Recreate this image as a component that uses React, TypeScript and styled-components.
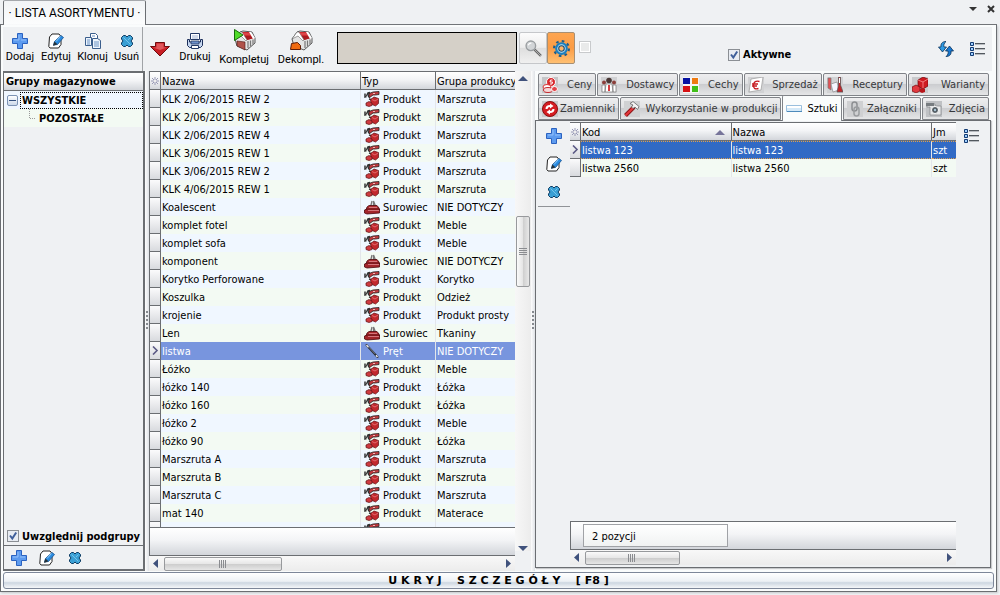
import React from "react";
import styled, { createGlobalStyle, css } from "styled-components";

const line = "#6b6e72";
const panel = "#eff1f3";
const steel = "linear-gradient(#ffffff, #f3f4f6 45%, #d3d6db)";

const Global = createGlobalStyle`
  * { box-sizing: border-box; }
  html, body { margin: 0; background: ${panel}; }
  body, button, input, table {
    font-family: "DejaVu Sans Condensed", "DejaVu Sans", sans-serif;
    font-size: 11px;
    color: #000;
  }
  button { border: 0; padding: 0; background: none; }
  svg { display: block; flex: none; }
`;

/* ---------- layout ---------- */

const Shell = styled.div`
  height: 100vh;
  display: flex;
  flex-direction: column;
  padding: 0 3px 3px 0;
  overflow: hidden;
`;
const TitleBar = styled.header`
  height: 25px;
  flex: none;
  display: flex;
  padding-left: 3px;
  background: linear-gradient(${line}, ${line}) bottom / 100% 1px no-repeat;
`;
const DocTab = styled.button`
  width: 143px;
  border: 1px solid ${line};
  border-top-color: #a5a8ac;
  border-bottom: 0;
  border-radius: 2px 2px 0 0;
  background: linear-gradient(#f2f4f6, #fcfdfd);
  font-family: Roboto, sans-serif;
  font-size: 12px;
  line-height: 24px;
`;
const WindowTools = styled.div`
  margin-left: auto;
  display: flex;
  gap: 10px;
  align-items: flex-start;
  padding: 4px 2px 0 0;
`;
const Frame = styled.main`
  flex: 1;
  min-height: 0;
  display: flex;
  flex-direction: column;
  border: 1px solid ${line};
  border-top: 0;
  padding: 2px;
  gap: 1px;
  background: #fafcfc;
  box-shadow: 1px 1px 2px #c5c8cb;
`;
const Work = styled.div`
  flex: 1;
  min-height: 0;
  display: flex;
`;
const Side = styled.aside`
  width: 142px;
  flex: none;
  display: flex;
  flex-direction: column;
  background: ${panel};
`;
const Content = styled.section`
  flex: 1;
  min-width: 0;
  display: flex;
  flex-direction: column;
`;
const Split = styled.div`
  flex: 1;
  min-height: 0;
  display: flex;
`;
const Toolbar = styled.div`
  height: 44px;
  flex: none;
  display: flex;
  background: ${panel};
`;
const SideTools = styled(Toolbar)`
  border-right: 1px solid #a0a3a6;
  margin-right: 2px;
  padding: 6px 3px 0;
  gap: 7px;
`;
const MainTools = styled(Toolbar)`
  padding-left: 5px;
  margin-right: 2px;
`;
const Tool = styled.button<{ $width: number; $low?: boolean }>`
  width: ${(p) => p.$width}px;
  flex: none;
  display: flex;
  flex-direction: column;
  align-items: center;
  gap: ${(p) => (p.$low ? 2 : 1)}px;
  align-self: flex-start;
  white-space: nowrap;
  font-family: Roboto, sans-serif;
  font-size: 11px;
  line-height: 14px;
`;
const ToolSet = styled.div`
  width: 182px;
  flex: none;
  display: flex;
  gap: 9px;
  padding-top: 2px;
`;
const Push = styled.div<{ $top: number }>`
  padding-top: ${(p) => p.$top}px;
`;
const SearchBox = styled.input`
  width: 180px;
  height: 32px;
  flex: none;
  margin: 5px 2px 0 5px;
  border: 1px solid #000;
  border-radius: 0;
  background: #d5d0c8;
`;
const SquareButton = styled.button<{ $on?: boolean }>`
  width: 28px;
  height: 32px;
  margin-top: 5px;
  display: flex;
  align-items: center;
  justify-content: center;
  border: 1px solid ${(p) => (p.$on ? "#a88f72" : "#c5c7ca")};
  border-radius: 2px;
  background: ${(p) =>
    p.$on
      ? "linear-gradient(#fda550, #fb9c45 50%, #ffc072)"
      : "linear-gradient(#fcfcfc, #ededed 48%, #dedede 50%, #f0f0f0)"};
`;
const Tick = styled.input`
  appearance: none;
  width: 12px;
  height: 12px;
  flex: none;
  margin: 0;
  border: 1px solid #8b8f94;
  background: #fff;
  box-shadow: inset 0 0 0 1px #fff, inset 0 0 0 9px #dfe4ec;
  &:checked {
    background: #e8ecf2
      url("data:image/svg+xml,%3Csvg xmlns='http://www.w3.org/2000/svg' viewBox='0 0 10 10'%3E%3Cpath d='M2 4.5l2.3 3L8.200 1.500' fill='none' stroke='%233f5f9a' stroke-width='2'/%3E%3C/svg%3E")
      center / 10px no-repeat;
    box-shadow: none;
  }
  &:disabled { border-color: #c8cacc; box-shadow: inset 0 0 0 1px #fff, inset 0 0 0 9px #e9eaea; }
`;
const TickLabel = styled.label`
  display: flex;
  align-items: center;
  gap: 3px;
  font-weight: bold;
  white-space: nowrap;
`;
const ActiveLabel = styled(TickLabel)`
  margin: 21px auto 0 137px;
  align-self: flex-start;
`;
const SpareTick = styled(Tick)`
  margin: 14px 0 0 4px;
`;
const RightTools = styled.div`
  display: flex;
  gap: 16px;
  padding: 14px 6px 0 0;
`;

/* ---------- group tree ---------- */

const TreeBox = styled.div`
  flex: 1;
  min-height: 0;
  border: 1px solid ${line};
  border-width: 2px 2px 0 1px;
`;
const TreeHead = styled.div`
  height: 18px;
  padding-left: 2px;
  border-bottom: 1px solid ${line};
  background: ${steel};
  font-weight: bold;
  line-height: 18px;
`;
const TreeItem = styled.div<{ $child?: boolean }>`
  height: 18px;
  display: flex;
  align-items: center;
  gap: ${(p) => (p.$child ? 3 : 2)}px;
  padding-left: ${(p) => (p.$child ? 25 : 3)}px;
  background: ${(p) => (p.$child ? "#f3faf3" : "#f0f7ff")};
  font-weight: bold;
`;
const Expander = styled.button`
  width: 11px;
  height: 11px;
  flex: none;
  display: flex;
  align-items: center;
  justify-content: center;
  border: 1px solid #7c93b4;
  border-radius: 2px;
  background: linear-gradient(#fff, #ccd9ea);
`;
const Focused = styled.span`
  flex: 1;
  height: 17px;
  line-height: 16px;
  border: 1px dotted #000;
  padding-left: 1px;
`;
const Subgroups = styled(TickLabel)`
  height: 18px;
  flex: none;
  padding-left: 3px;
  border: 1px solid ${line};
  border-width: 0 2px 0 1px;
`;
const SideFoot = styled.div`
  height: 26px;
  flex: none;
  display: flex;
  align-items: center;
  gap: 12px;
  padding-left: 7px;
  border: 1px solid ${line};
  border-right-width: 2px;
  border-bottom-width: 2px;
`;

/* ---------- splitters and scroll bars ---------- */

const Splitter = styled.div`
  width: 4px;
  flex: none;
  display: flex;
  align-items: center;
  justify-content: center;
  background: linear-gradient(90deg, #fdfdfd, #dfe2e6);
`;
const Vertical = styled.div`
  width: 16px;
  flex: none;
  display: flex;
  flex-direction: column;
  align-items: center;
  padding: 4px 0 0;
  margin-bottom: 20px;
  background: linear-gradient(90deg, #f7f7f7, #ececec);
`;
const Horizontal = styled.div`
  height: 15px;
  flex: none;
  display: flex;
  align-items: center;
  gap: 6px;
  padding: 0 4px;
  background: linear-gradient(#f8f8f8, #ececec);
`;
const thumb = css`
  border: 1px solid #97999c;
  border-radius: 2px;
  display: flex;
  align-items: center;
  justify-content: center;
`;
const VThumb = styled.div`
  ${thumb}
  width: 14px;
  height: 71px;
  background: linear-gradient(90deg, #fafafa, #e4e4e4 50%, #cfcfcf 52%, #e8e8e8);
`;
const HThumb = styled.div<{ $share: number }>`
  ${thumb}
  width: ${(p) => p.$share}%;
  height: 14px;
  background: linear-gradient(#fafafa, #e6e6e6 50%, #cdcdcd 52%, #e6e6e6);
`;
const Spacer = styled.div`
  flex: 1;
`;
const TrackAbove = styled.div`
  height: 135px;
  flex: none;
`;

/* ---------- data grids ---------- */

const ListPane = styled.div`
  width: 46%;
  max-width: 382px;
  flex: none;
  display: flex;
  background: ${panel};
`;
const ListBody = styled.div`
  flex: 1;
  min-width: 0;
  display: flex;
  flex-direction: column;
`;
const GridArea = styled.div`
  flex: 1;
  min-height: 0;
  overflow: hidden;
  border-top: 1px solid ${line};
  border-left: 1px solid ${line};
`;
const DetailArea = styled(GridArea)`
  border-left: 0;
`;
const Table = styled.table`
  width: 100%;
  table-layout: fixed;
  border-collapse: separate;
  border-spacing: 0;
`;
const Col = styled.col<{ $w?: string }>`
  width: ${(p) => p.$w ?? "auto"};
`;
const Head = styled.th`
  height: 18px;
  padding: 1px 1px 0;
  border-right: 1px solid ${line};
  border-bottom: 1px solid ${line};
  background: ${steel};
  font-weight: normal;
  text-align: left;
  white-space: nowrap;
  overflow: hidden;
  &:last-child { border-right: 0; }
`;
const Marker = styled.td`
  height: 18px;
  padding: 0 1px;
  border-right: 1px solid ${line};
  border-bottom: 1px solid ${line};
  background: linear-gradient(#fbfbfc, #d8dade);
`;
const Cell = styled.td<{ $tone: string; $selected?: "soft" | "strong" }>`
  height: 18px;
  padding: 0 1px;
  white-space: nowrap;
  overflow: hidden;
  border-right: 1px solid #e3e6ea;
  background: ${(p) => p.$tone};
  &:last-child { border-right: 0; }
  ${(p) => p.$selected && css`color: #fff;`}
  ${(p) => p.$selected === "soft" && css`background: #7895de;`}
  ${(p) =>
    p.$selected === "strong" &&
    css`
      background: #316ac5;
      border-top: 1px dotted #e0a050;
      border-bottom: 1px dotted #e0a050;
    `}
`;
const Kind = styled.span`
  display: flex;
  align-items: center;
  gap: 3px;
  padding-left: 2px;
`;
const SortHead = styled.span`
  display: flex;
  align-items: center;
  justify-content: space-between;
  padding-right: 5px;
`;
const FootBand = styled.div`
  height: 29px;
  flex: none;
  border: 1px solid ${line};
  border-right: 0;
  background: ${steel};
`;
const CountBand = styled(FootBand)`
  padding: 2px 0 2px 12px;
`;
const Count = styled.div`
  width: 39%;
  height: 23px;
  padding-left: 8px;
  border: 1px solid #a0a2a6;
  background: linear-gradient(#fff, #f0f2f2);
  line-height: 23px;
`;

/* ---------- details ---------- */

const Details = styled.div`
  flex: 1;
  min-width: 0;
  display: flex;
  flex-direction: column;
  padding: 2px 3px 3px 0;
`;
const TabRow = styled.div`
  height: 23px;
  flex: none;
  display: flex;
  gap: 1px;
  padding: 0 2px 0 3px;
  & + & { margin-top: 1px; }
`;
const Tab = styled.button<{ $size: number; $active?: boolean }>`
  flex: 1 1 ${(p) => p.$size}px;
  min-width: 0;
  height: 23px;
  display: flex;
  align-items: center;
  justify-content: space-between;
  padding: 0 3px;
  border: 1px solid #808388;
  border-radius: 2px 2px 0 0;
  background: linear-gradient(#eeeeef, #e1e2e4 45%, #cccdd0 50%, #e5e6e7);
  color: #36383b;
  white-space: nowrap;
  ${(p) =>
    p.$active &&
    css`
      position: relative;
      height: 26px;
      margin-top: -2px;
      color: #000;
      border-bottom: 0;
      background: #fafcfc;
    `}
`;
const DetailPane = styled.div`
  flex: 1;
  min-height: 0;
  display: flex;
  border: 1px solid ${line};
  padding: 1px 2px 2px;
  background: ${panel};
  box-shadow: 1px 1px 1px #c8cacc;
`;
const EditColumn = styled.div`
  width: 32px;
  flex: none;
  align-self: flex-start;
  display: flex;
  flex-direction: column;
  align-items: center;
  gap: 12px;
  padding: 6px 0 6px;
  border-bottom: 1px solid #909397;
`;
const DetailGrid = styled.div`
  flex: 1;
  min-width: 0;
  display: flex;
  flex-direction: column;
`;
const MenuColumn = styled.div`
  width: 32px;
  flex: none;
  padding: 6px 0 0 8px;
`;
const BottomBar = styled.button`
  height: 17px;
  flex: none;
  border: 1px solid #7d8799;
  border-radius: 3px;
  background: linear-gradient(#fff, #edf1f5 55%, #cdd7e1 65%, #f5f7f9);
  font-family: "DejaVu Sans", sans-serif;
  font-weight: bold;
  line-height: 14px;
  white-space: pre;
`;

/* ---------- icons ---------- */

type IconProps = { size?: number; children: React.ReactNode };
const Icon = ({ size = 16, children }: IconProps) => (
  <svg width={size} height={size} viewBox="0 0 16 16" aria-hidden="true">{children}</svg>
);

const Plus = () => (
  <Icon>
    <path d="M5.500.5h5v5h5v5h-5v5h-5v-5h-5v-5h5z" fill="#5d9bef" stroke="#2b62c0" />
    <path d="M7 2v5H2M9 7h5" fill="none" stroke="#94c0fa" />
  </Icon>
);
const Edit = () => (
  <Icon>
    <path d="M4 1h7l2 2.500v8L10.500 15H2L.800 13.500 1.500 4z" fill="#fff" stroke="#222" />
    <path d="M5.500 12l1-3.500 6.500-6 2.500 2-6 7z" fill="#2a8be0" stroke="#16528f" strokeWidth=".8" />
    <path d="M5 13l1.400-4.500 3 2.800z" fill="#263238" />
    <path d="M8 8.500l4.500-5" stroke="#8fd0ff" />
  </Icon>
);
const Copy = () => (
  <Icon>
    <path d="M5.500.5h5l2 2v8h-7z" fill="#fff" stroke="#3a5e8c" />
    <path d="M.5 4.500h6v8h-6zM7.500 5.500h5l3 2v8h-8z" fill="#eef5fd" stroke="#3a5e8c" />
    <path d="M2 7h3M2 9h3M2 11h3M9 9h5M9 11h5M9 13h5M7 3h3" stroke="#6b93c4" />
  </Icon>
);
const Remove = () => (
  <Icon>
    <path d="M4.500 2.500h2L8 4l1.500-1.500h2l2 2v1.500L12 8l1.500 2v1.500l-2 2h-2L8 12l-1.500 1.500h-2l-2-2V10L4 8 2.500 6V4.500z" fill="#3a9fd4" stroke="#0e3c63" strokeLinejoin="round" />
    <path d="M4.500 4.500l7 7M11.500 4.500L9 7" stroke="#74c4ea" />
  </Icon>
);
const RedArrow = () => (
  <svg width="20" height="15" viewBox="0 0 20 15" aria-hidden="true">
    <path d="M5.500.5h9v4h5L10 14 .5 4.500h5z" fill="#c81e24" stroke="#6f0a0d" />
    <path d="M6.500 1.500h7v4h3L10 8 3 5.500h3.500z" fill="#e0575b" />
  </svg>
);
const Printer = () => (
  <Icon>
    <path d="M3.500.5h9v6h-9z" fill="#fff" stroke="#243a66" />
    <path d="M.5 6.500h2V9h11V6.500h2v6l-2 2h-11l-2-2z" fill="#c5d6ef" stroke="#1c2f5a" />
    <path d="M4 8h8v3H4z" fill="#6f92ca" stroke="#1c2f5a" strokeWidth=".7" />
    <path d="M4.500 12.500h7v3h-7z" fill="#fff" stroke="#243a66" />
    <path d="M5 3h6M5 5h6" stroke="#9fb2d2" />
  </Icon>
);
const Barn = ({ play }: { play?: boolean }) => (
  <svg width="23" height="22" viewBox="0 0 23 22" aria-hidden="true">
    <path d="M2 10l5-7 3-1 9 1 3 6v5l-8 7-10-4z" fill="#e4e4e4" stroke="#333" strokeWidth=".8" />
    <path d="M8 3l9 0 4 6-7 2z" fill="#cf2a2f" />
    <path d="M11 7l8 0 2 2-7 2z" fill="#a81b20" />
    <path d="M2 10l5-7 2 0 5 8-1 1-5-5z" fill="#fff" stroke="#666" strokeWidth=".6" />
    <path d="M16 3l2 0 4 6-2 1z" fill="#fff" />
    <path d="M15 12v7M17.500 11.500v6M20 10.500v5" stroke="#777" strokeWidth="1.200" />
    <path d="M10 5l7 0" stroke="#ee6f72" strokeWidth=".8" />
    {play ? (
      <>
        <path d="M4 12l8 1v8l-8-4z" fill="#b0524a" stroke="#4a1612" strokeWidth=".6" />
        <path d="M1.500.5v11L10 6z" fill="#4fdc28" stroke="#176b0a" />
      </>
    ) : (
      <path d="M.5 20.500l1-6 6-1 3 3v4z" fill="#f06a10" stroke="#601c05" />
    )}
  </svg>
);
const Magnifier = () => (
  <Icon size={17}>
    <path d="M9 9l6 6" stroke="#666" strokeWidth="2.400" />
    <path d="M9 9l6 6" stroke="#bbb" strokeWidth=".8" />
    <circle cx="5.500" cy="5.500" r="4.500" fill="#d2d5d7" stroke="#999da0" strokeWidth="1.300" />
    <path d="M3 5q1-2.500 3-2" fill="none" stroke="#fff" />
  </Icon>
);
const Gear = () => (
  <Icon size={17}>
    <circle cx="8" cy="8" r="7" fill="none" stroke="#1c5e8b" strokeWidth="2" strokeDasharray="2.500 3" />
    <circle cx="8" cy="8" r="5" fill="#bfe2f4" stroke="#1a7fc0" strokeWidth="2" />
    <circle cx="8" cy="8" r="2.600" fill="#ffb568" stroke="#124c78" />
  </Icon>
);
const Refresh = () => (
  <Icon>
    <path d="M8 .5C4 .5 2.500 3 3 6H.5L4.500 11l4-5H6C5.500 4 6 2 8 .5z" fill="#2f9be4" stroke="#0a3158" strokeWidth=".8" />
    <path d="M8 15.500c4 0 5.500-2.500 5-5.500h2.500L11.500 5l-4 5H10c.5 2 0 4-2 5.500z" fill="#1878d0" stroke="#0a3158" strokeWidth=".8" />
  </Icon>
);
const ListIcon = () => (
  <Icon>
    <path d="M.5 1.500h3v3h-3zM.5 6.500h3v3h-3zM.5 11.500h3v3h-3z" fill="#9ed0ff" stroke="#123a73" />
    <path d="M5 2.500h10M5 7.500h10M5 12.500h10" stroke="#52585e" />
    <path d="M5 3.500h10M5 8.500h10M5 13.500h10" stroke="#b8bcc0" />
  </Icon>
);
const Product = () => (
  <Icon>
    <path d="M1 2.500V6l1.500-.5M2.500 5L4 2l2-.5M5.500 2L4.500 6" fill="none" stroke="#333" strokeWidth="1.500" />
    <path d="M5 2.500L9 1l6-.5v3L11.500 4 9 4 5 7z" fill="#c0393d" stroke="#222" strokeWidth=".8" />
    <path d="M9 2.500h2" stroke="#f3b3b5" />
    <path d="M5 8l4 1" stroke="#333" strokeWidth="1.500" />
    <path d="M6.500 8.500L10 6l4.500 1.500v5L11.500 15 7 13z" fill="#c2282d" stroke="#5c1013" strokeWidth=".7" />
    <path d="M8 8.500l3 1.500 3-2" fill="none" stroke="#e87b7e" strokeWidth=".8" />
    <path d="M2 12l3-1.500L8 12v2.500l-3 1-3-1z" fill="#cf3a3f" stroke="#5c1013" strokeWidth=".7" />
  </Icon>
);
const Raw = () => (
  <Icon>
    <path d="M6.500 8L8 2M9.500 8V2l2 5" fill="none" stroke="#777" strokeWidth="1.300" />
    <path d="M3 8l2-1.500h8L15 9l.5 2H2z" fill="#b02c31" stroke="#4d080b" strokeWidth=".8" />
    <path d="M.5 11L3 10h12.500v4L3 15 .5 14z" fill="#a3252a" stroke="#4d080b" strokeWidth=".8" />
    <path d="M4 11.500h11M5 8.500h8" stroke="#d5757a" />
  </Icon>
);
const Rod = () => (
  <Icon>
    <path d="M2.500 2l11 12" stroke="#2d3038" strokeWidth="2" strokeLinecap="round" />
    <path d="M2.500 2l2 2.200M12 12.300l1.500 1.700" stroke="#eee" strokeWidth="1.300" />
    <path d="M5 4.200l6 6.600" stroke="#98a0ad" strokeWidth=".7" />
  </Icon>
);
const Star = () => (
  <Icon size={8}>
    <path d="M8 0v16M0 8h16M2 2l12 12M14 2L2 14" stroke="#8d8eae" strokeWidth="1.800" />
    <circle cx="8" cy="8" r="2.500" fill="#eee" />
  </Icon>
);
const Chevron = () => (
  <svg width="8" height="9" viewBox="0 0 8 9" aria-hidden="true">
    <path d="M2 .5l4 4-4 4" fill="none" stroke="#5c5a85" strokeWidth="1.600" />
  </svg>
);
const arrows = {
  up: "M0 6l5-5 5 5z",
  down: "M0 1h10L5 6z",
};
const Arrow = ({ dir, color = "#40527c" }: { dir: "up" | "down"; color?: string }) => (
  <svg width="10" height="6" viewBox="0 0 10 6" aria-hidden="true"><path d={arrows[dir]} fill={color} /></svg>
);
const SideArrow = ({ right }: { right?: boolean }) => (
  <svg width="5" height="9" viewBox="0 0 5 9" aria-hidden="true">
    <path d={right ? "M0 0l5 4.500L0 9z" : "M5 0L0 4.500 5 9z"} fill="#40527c" />
  </svg>
);
const Grip = ({ across }: { across?: boolean }) => (
  <svg width="8" height="8" viewBox="0 0 8 8" aria-hidden="true">
    <path d={across ? "M0 .5h8M0 2.500h8M0 4.500h8M0 6.500h8" : "M.5 0v8M2.500 0v8M4.500 0v8M6.500 0v8"} stroke="#8a8c90" />
  </svg>
);
const Dots = () => (
  <svg width="4" height="20" viewBox="0 0 4 20" aria-hidden="true">
    <path d="M1 1h2M1 5h2M1 9h2M1 13h2M1 17h2" stroke="#85898e" strokeWidth="2" />
  </svg>
);

const tabIcons: Record<string, React.ReactNode> = {
  Ceny: <><path d="M0 0h16v16H0z" fill="#c5c6c8" /><circle cx="9" cy="5" r="4.500" fill="#d8272c" stroke="#fff" /><path d="M10.500 3H8.500L8 5h2.500l-.5 2H8" fill="none" stroke="#fff" /><ellipse cx="5" cy="10" rx="4" ry="2.500" fill="#fff" stroke="#d33" /><ellipse cx="6" cy="13" rx="4.500" ry="2.500" fill="#f4d7d7" stroke="#c4272c" /><ellipse cx="12.500" cy="12" rx="3" ry="2.500" fill="#e34348" stroke="#fff" /></>,
  Dostawcy: <><path d="M0 0h16v16H0z" fill="#d1d2d4" /><circle cx="8" cy="3.500" r="2.800" fill="#4a3835" /><circle cx="3" cy="5.500" r="2" fill="#8c3f3b" /><circle cx="13" cy="5.500" r="2" fill="#8c3f3b" /><path d="M5 7h6l1 8H4zM1 8h3v7H1zM12 8h3v7h-3z" fill="#fff" stroke="#777" strokeWidth=".7" /><path d="M8 8v6" stroke="#d3262b" strokeWidth="1.800" /></>,
  Cechy: <><path d="M0 0h16v16H0z" fill="#f5f5f5" /><path d="M0 1h7v6H0z" fill="#0713a2" /><path d="M9 1h6v6H9z" fill="#ee7b12" /><path d="M0 9h7v6H0z" fill="#d61314" /><path d="M9 9h6v6H9z" fill="#41bf1a" /></>,
  "Sprzedaż": <><path d="M0 0h16v16H0z" fill="#d1d2d4" /><path d="M3 2l12-2-2 13-12 2z" fill="#fff" stroke="#999" strokeWidth=".7" /><path d="M11.500 4.500Q6 3 5.500 8t5 3.500M4 7h6M4 9h5" fill="none" stroke="#c61c22" strokeWidth="1.300" /></>,
  Receptury: <><path d="M0 0h16v16H0z" fill="#d1d2d4" /><path d="M1 1h3v12l-3-2z" fill="#e45357" stroke="#777" strokeWidth=".7" /><path d="M4 7l6-2 2 8-6 2z" fill="#f5f6ff" stroke="#888" strokeWidth=".7" /><path d="M11.500 0h2v8l2.500 7h-6l1.500-7z" fill="#c2262b" stroke="#555" strokeWidth=".7" /><path d="M12.500 1v5" stroke="#fff" /></>,
  Warianty: <><path d="M0 0h16v16H0z" fill="#c9cacc" /><path d="M6 3l5-3 5 2v7l-5 3-5-2z" fill="#cf1a20" stroke="#70090d" strokeWidth=".7" /><path d="M6 3l5 2 5-3M11 5v6" fill="none" stroke="#f2797c" /><path d="M0 10l4-2 4 2v4l-4 2-4-2z" fill="#e03a3f" stroke="#70090d" strokeWidth=".7" /><path d="M8 12l3-1 2 1v3l-3 1-2-1z" fill="#b8151a" /></>,
  Zamienniki: <><path d="M0 0h16v16H0z" fill="#c9cacc" /><circle cx="8" cy="8" r="7.500" fill="#d51d22" stroke="#8b0d10" /><path d="M3.500 8q0-4 4.500-4V2.500L11.500 5 8 7.500V6Q5.500 6 5.500 8zM12.500 8q0 4-4.500 4v1.500L4.500 11 8 8.500V10q2.500 0 2.500-2z" fill="#fff" /></>,
  "Wykorzystanie w produkcji": <><path d="M0 0h16v16H0z" fill="#d0d1d3" /><path d="M1.500 14.500L10 6" stroke="#8f1518" strokeWidth="4" /><path d="M1.500 14.500L9 7" stroke="#e4373b" strokeWidth="2" /><path d="M6 2.500l3-2 6 5-1.500 3L11 6 9 7.500 7.500 6 9 4z" fill="#f4f4f4" stroke="#666" strokeWidth=".8" /></>,
  Sztuki: <><path d="M.5 4.500h15v6H.5z" fill="#d4e9f8" stroke="#9abfdd" /><path d="M1 5h14v2H1z" fill="#fff" /><path d="M1 10.500h15" stroke="#4d8abb" /></>,
  "Załączniki": <><path d="M0 0h16v16H0z" fill="#cfd0d2" /><rect x="5" y="1" width="5" height="9" rx="2.500" fill="none" stroke="#8d8f92" strokeWidth="1.500" /><rect x="7" y="6" width="5" height="9" rx="2.500" fill="none" stroke="#9b9da0" strokeWidth="1.500" /></>,
  "Zdjęcia": <><path d="M0 0h16v16H0z" fill="#bfc1c4" /><path d="M1 3h8v2h6v9H4V6H1z" fill="#e6e7e8" stroke="#85888b" strokeWidth=".7" /><path d="M0 2h8v3H0z" fill="#777c80" /><circle cx="9" cy="9" r="3.500" fill="#525b62" stroke="#fff" /><circle cx="9" cy="9" r="1.200" fill="#a9c5d6" /></>,
};

/* ---------- data ---------- */

type Item = [name: string, kind: string, group: string];
const items: Item[] = [
  ["KLK 2/06/2015 REW 2", "Produkt", "Marszruta"],
  ["KLK 2/06/2015 REW 3", "Produkt", "Marszruta"],
  ["KLK 2/06/2015 REW 4", "Produkt", "Marszruta"],
  ["KLK 3/06/2015 REW 1", "Produkt", "Marszruta"],
  ["KLK 3/06/2015 REW 2", "Produkt", "Marszruta"],
  ["KLK 4/06/2015 REW 1", "Produkt", "Marszruta"],
  ["Koalescent", "Surowiec", "NIE DOTYCZY"],
  ["komplet fotel", "Produkt", "Meble"],
  ["komplet sofa", "Produkt", "Meble"],
  ["komponent", "Surowiec", "NIE DOTYCZY"],
  ["Korytko Perforowane", "Produkt", "Korytko"],
  ["Koszulka", "Produkt", "Odzież"],
  ["krojenie", "Produkt", "Produkt prosty"],
  ["Len", "Surowiec", "Tkaniny"],
  ["listwa", "Pręt", "NIE DOTYCZY"],
  ["Łóżko", "Produkt", "Meble"],
  ["łóżko 140", "Produkt", "Łóżka"],
  ["łóżko 160", "Produkt", "Łóżka"],
  ["łóżko 2", "Produkt", "Meble"],
  ["łóżko 90", "Produkt", "Łóżka"],
  ["Marszruta A", "Produkt", "Marszruta"],
  ["Marszruta B", "Produkt", "Marszruta"],
  ["Marszruta C", "Produkt", "Marszruta"],
  ["mat 140", "Produkt", "Materace"],
  ["", "Produkt", ""],
];
const tones = ["#f0f7ff", "#f3faf3"];
const tabRows: [string, number][][] = [
  [["Ceny", 58], ["Dostawcy", 81], ["Cechy", 63], ["Sprzedaż", 78], ["Receptury", 84], ["Warianty", 81]],
  [["Zamienniki", 81], ["Wykorzystanie w produkcji", 161], ["Sztuki", 59], ["Załączniki", 78], ["Zdjęcia", 67]],
];
const kindIcon = (kind: string) => (kind === "Surowiec" ? <Raw /> : kind === "Pręt" ? <Rod /> : <Product />);

/* ---------- parts ---------- */

const ItemTable = () => (
  <Table>
    <colgroup><Col $w="11px" /><Col /><Col $w="75px" /><Col $w="79px" /></colgroup>
    <thead>
      <tr><Head aria-label="Wiersz"><Star /></Head><Head>Nazwa</Head><Head>Typ</Head><Head>Grupa produkcyjna</Head></tr>
    </thead>
    <tbody>
      {items.map(([name, kind, group], i) => {
        const selected = name === "listwa" ? "soft" : undefined;
        const look = { $tone: tones[i % 2], $selected: selected } as const;
        return (
          <tr key={i}>
            <Marker>{selected && <Chevron />}</Marker>
            <Cell {...look}>{name}</Cell>
            <Cell {...look}><Kind>{kindIcon(kind)}{kind}</Kind></Cell>
            <Cell {...look}>{group}</Cell>
          </tr>
        );
      })}
    </tbody>
  </Table>
);

const PieceTable = () => (
  <Table>
    <colgroup><Col $w="11px" /><Col $w="39%" /><Col /><Col $w="24px" /></colgroup>
    <thead>
      <tr>
        <Head aria-label="Wiersz"><Star /></Head>
        <Head><SortHead>Kod<Arrow dir="up" color="#77759a" /></SortHead></Head>
        <Head>Nazwa</Head>
        <Head>Jm</Head>
      </tr>
    </thead>
    <tbody>
      {["listwa 123", "listwa 2560"].map((name, i) => {
        const look = { $tone: tones[i], $selected: i === 0 ? "strong" : undefined } as const;
        return (
          <tr key={name}>
            <Marker>{i === 0 && <Chevron />}</Marker>
            <Cell {...look}>{name}</Cell>
            <Cell {...look}>{name}</Cell>
            <Cell {...look}>szt</Cell>
          </tr>
        );
      })}
    </tbody>
  </Table>
);

export default function App() {
  return (
    <>
      <Global />
      <Shell>
        <TitleBar>
          <DocTab>· LISTA ASORTYMENTU ·</DocTab>
          <WindowTools>
            <button aria-label="Lista okien">
              <svg width="8" height="10" viewBox="0 0 8 10"><path d="M0 3h8L4 7z" fill="#333" /></svg>
            </button>
            <button aria-label="Zamknij">
              <svg width="8" height="10" viewBox="0 0 8 10"><path d="M1 2l6 6M7 2L1 8" stroke="#333" strokeWidth="2" /></svg>
            </button>
          </WindowTools>
        </TitleBar>
        <Frame>
          <Work>
            <Side>
              <SideTools>
                <Tool $width={28}><Plus />Dodaj</Tool>
                <Tool $width={30}><Edit />Edytuj</Tool>
                <Tool $width={29}><Copy />Klonuj</Tool>
                <Tool $width={25}><Remove />Usuń</Tool>
              </SideTools>
              <TreeBox>
                <TreeHead>Grupy magazynowe</TreeHead>
                <TreeItem>
                  <Expander aria-label="Zwiń">
                    <svg width="7" height="1" viewBox="0 0 7 1"><path d="M0 .5h7" stroke="#33507e" /></svg>
                  </Expander>
                  <Focused>WSZYSTKIE</Focused>
                </TreeItem>
                <TreeItem $child>
                  <svg width="7" height="18" viewBox="0 0 7 18"><path d="M.5 0v9.500H7" fill="none" stroke="#999" strokeDasharray="1 1" /></svg>
                  POZOSTAŁE
                </TreeItem>
              </TreeBox>
              <Subgroups><Tick type="checkbox" defaultChecked />Uwzględnij podgrupy</Subgroups>
              <SideFoot>
                <button aria-label="Dodaj grupę"><Plus /></button>
                <button aria-label="Edytuj grupę"><Edit /></button>
                <button aria-label="Usuń grupę"><Remove /></button>
              </SideFoot>
            </Side>
            <Content>
              <MainTools>
                <ToolSet>
                  <Push $top={13}><Tool $width={20} aria-label="W dół"><RedArrow /></Tool></Push>
                  <Push $top={4}><Tool $width={32}><Printer />Drukuj</Tool></Push>
                  <Tool $width={48} $low><Barn play />Kompletuj</Tool>
                  <Tool $width={48} $low><Barn />Dekompl.</Tool>
                </ToolSet>
                <SearchBox aria-label="Szukaj" />
                <SquareButton aria-label="Znajdź"><Magnifier /></SquareButton>
                <SquareButton $on aria-label="Ustawienia"><Gear /></SquareButton>
                <SpareTick type="checkbox" disabled aria-label="Filtr" />
                <ActiveLabel><Tick type="checkbox" defaultChecked />Aktywne</ActiveLabel>
                <RightTools>
                  <Tool $width={16} aria-label="Odśwież"><Refresh /></Tool>
                  <Tool $width={16} aria-label="Kolumny"><ListIcon /></Tool>
                </RightTools>
              </MainTools>
              <Split>
                <Splitter><Dots /></Splitter>
                <ListPane>
                  <ListBody>
                    <GridArea><ItemTable /></GridArea>
                    <FootBand />
                    <Horizontal>
                      <SideArrow /><HThumb $share={33}><Grip /></HThumb><Spacer /><SideArrow right />
                    </Horizontal>
                  </ListBody>
                  <Vertical>
                    <Arrow dir="up" /><TrackAbove /><VThumb><Grip across /></VThumb><Spacer /><Arrow dir="down" />
                  </Vertical>
                </ListPane>
                <Splitter><Dots /></Splitter>
                <Details>
                  {tabRows.map((row, r) => (
                    <TabRow key={r} role="tablist">
                      {row.map(([name, size]) => (
                        <Tab key={name} role="tab" $size={size} $active={name === "Sztuki"} aria-selected={name === "Sztuki"}>
                          <Icon>{tabIcons[name]}</Icon>{name}
                        </Tab>
                      ))}
                    </TabRow>
                  ))}
                  <DetailPane>
                    <EditColumn>
                      <button aria-label="Dodaj sztukę"><Plus /></button>
                      <button aria-label="Edytuj sztukę"><Edit /></button>
                      <button aria-label="Usuń sztukę"><Remove /></button>
                    </EditColumn>
                    <DetailGrid>
                      <DetailArea><PieceTable /></DetailArea>
                      <CountBand><Count>2 pozycji</Count></CountBand>
                      <Horizontal>
                        <SideArrow /><HThumb $share={25}><Grip /></HThumb><Spacer /><SideArrow right />
                      </Horizontal>
                    </DetailGrid>
                    <MenuColumn><button aria-label="Kolumny sztuk"><ListIcon /></button></MenuColumn>
                  </DetailPane>
                </Details>
              </Split>
            </Content>
          </Work>
          <BottomBar>{"U K R Y J    S Z C Z E G Ó Ł Y    [ F8 ]"}</BottomBar>
        </Frame>
      </Shell>
    </>
  );
}
